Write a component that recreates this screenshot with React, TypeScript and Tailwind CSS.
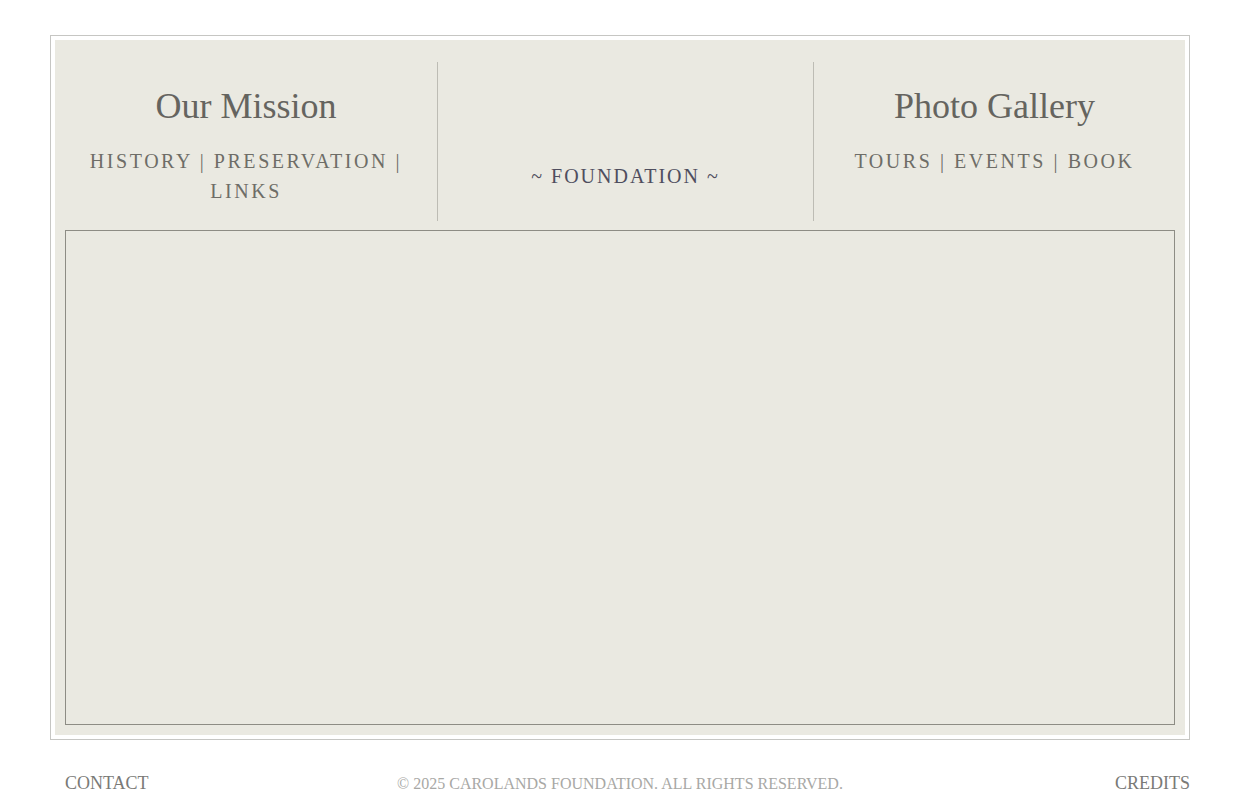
const serif = "font-['Liberation_Serif','Times_New_Roman',serif]";

const NavCol = ({
  title,
  links,
  className,
}: {
  title: string;
  links: string[][];
  className: string;
}) => (
  <div className={`flex flex-col items-center pt-[23px] ${className}`}>
    <h2 className="text-[36px] leading-[43px] text-[#65645f]">{title}</h2>
    <div className="mt-[18px] text-center text-[20px] leading-[30px] tracking-[2.55px] text-[#6e6d67]">
      {links.map((line, i) => (
        <div key={i}>{line.join(" | ")}</div>
      ))}
    </div>
  </div>
);

export default function App() {
  return (
    <div className={`${serif} min-h-[800px] bg-white px-[50px] pt-[35px]`}>
      <div className="border border-[#c6c6c3] p-[4px]">
        <div className="bg-[#eae9e1] px-[10px] pt-[22px] pb-[10px]">
          <div className="flex h-[159px]">
            <NavCol
              title="Our Mission"
              links={[["HISTORY", "PRESERVATION", ""], ["LINKS"]]}
              className="w-[373px] pr-[10px] border-r border-[#bdbcb4]"
            />
            <div className="w-[376px] border-r border-[#bdbcb4] pt-[99px] text-center text-[20px] leading-[30px] tracking-[2px] text-[#4f4e5e]">
              ~ FOUNDATION ~
            </div>
            <NavCol
              title="Photo Gallery"
              links={[["TOURS", "EVENTS", "BOOK"]]}
              className="flex-1"
            />
          </div>
          <div className="mt-[9px] h-[495px] border border-[#8d8c84]" />
        </div>
      </div>
      <footer className="mt-[30px] grid grid-cols-[1fr_auto_1fr] items-baseline">
        <a className="pl-[15px] text-[18px] text-[#7a7a77]">CONTACT</a>
        <p className="text-[16px] text-[#a8a8a5]">
          © 2025 CAROLANDS FOUNDATION. ALL RIGHTS RESERVED.
        </p>
        <a className="justify-self-end text-[18px] text-[#7a7a77]">CREDITS</a>
      </footer>
    </div>
  );
}
